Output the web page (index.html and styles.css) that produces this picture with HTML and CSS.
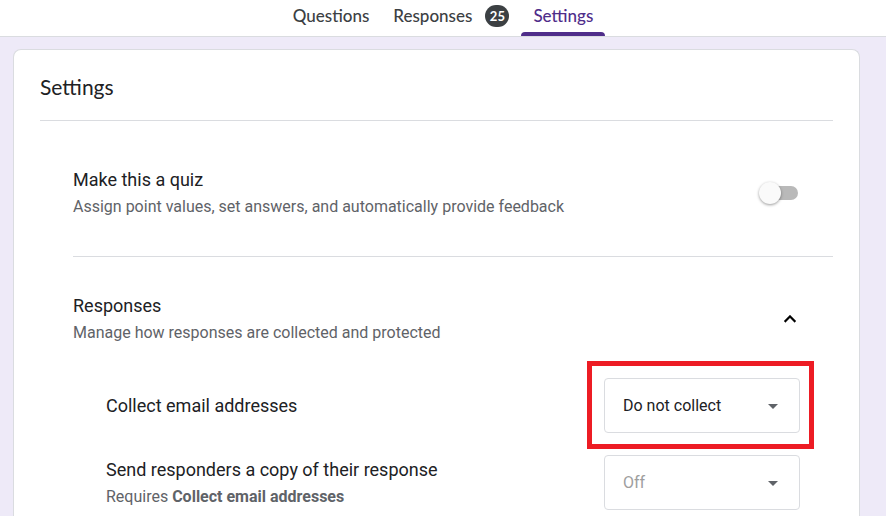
FILE: index.html
```
<!DOCTYPE html>
<html lang="en">
<head>
<meta charset="utf-8">
<meta name="viewport" content="width=device-width, initial-scale=1">
<title>Settings</title>
<link rel="stylesheet" href="styles.css">
</head>
<body>
<nav class="tabs">
  <a class="tab" href="#questions">Questions</a>
  <a class="tab" href="#responses">Responses <span class="badge">25</span></a>
  <a class="tab tab-active" href="#settings" aria-current="page">Settings</a>
</nav>
<main class="page">
  <section class="card">
    <h1 class="card-title">Settings</h1>
    <div class="sections">
      <div class="row quiz">
        <div class="text">
          <label class="heading" for="quiz">Make this a quiz</label>
          <p class="note">Assign point values, set answers, and automatically provide feedback</p>
        </div>
        <input class="switch" type="checkbox" role="switch" id="quiz">
      </div>
      <div class="row responses">
        <div class="text">
          <h2 class="heading">Responses</h2>
          <p class="note">Manage how responses are collected and protected</p>
        </div>
        <button class="collapse" type="button" aria-label="Collapse responses" aria-expanded="true">
          <svg width="24" height="24" viewBox="0 0 24 24" aria-hidden="true"><path d="M12 8l-6 6 1.41 1.41L12 10.83l4.59 4.58L18 14z" fill="#000" stroke="#000" stroke-width=".3"/></svg>
        </button>
      </div>
      <div class="options">
        <div class="row option">
          <div class="text">
            <label class="heading" for="collect">Collect email addresses</label>
          </div>
          <div class="picker picker-marked">
            <select id="collect">
              <option>Do not collect</option>
              <option>Verified</option>
              <option>Responder input</option>
            </select>
            <svg class="arrow" width="10" height="5" viewBox="0 0 10 5" aria-hidden="true"><path d="M0 0h10L5 5z" fill="#5f6368"/></svg>
          </div>
        </div>
        <div class="row option">
          <div class="text">
            <label class="heading" for="copy">Send responders a copy of their response</label>
            <p class="note">Requires <b>Collect email addresses</b></p>
          </div>
          <div class="picker">
            <select id="copy" disabled>
              <option>Off</option>
            </select>
            <svg class="arrow" width="10" height="5" viewBox="0 0 10 5" aria-hidden="true"><path d="M0 0h10L5 5z" fill="#5f6368"/></svg>
          </div>
        </div>
      </div>
    </div>
  </section>
</main>
</body>
</html>
```
FILE: styles.css
```
* {
  box-sizing: border-box;
}

body {
  margin: 0;
  height: 100vh;
  overflow: hidden;
  display: flex;
  flex-direction: column;
  background: #eeeaf8;
  color: #202124;
  font-family: Roboto, "Liberation Sans", sans-serif;
  font-size: 16px;
}

h1, h2, p {
  margin: 0;
  font-weight: 400;
}

.tabs {
  display: flex;
  justify-content: center;
  flex: none;
  background: #fff;
  border-bottom: 1px solid #dadce0;
}

.tab {
  position: relative;
  display: flex;
  align-items: center;
  gap: 13px;
  height: 36px;
  padding: 0 12px 5px;
  color: #3c4043;
  font-family: Lato, "Open Sans", sans-serif;
  font-size: 17px;
  font-weight: 500;
  text-decoration: none;
}

.tab-active {
  color: #4f2d8a;
}

.tab-active::after {
  content: "";
  position: absolute;
  left: 0;
  right: 0;
  bottom: 0;
  height: 4px;
  border-radius: 4px 4px 0 0;
  background: #4f2d8a;
}

.badge {
  width: 24px;
  height: 22px;
  border-radius: 12px;
  background: #3c4043;
  color: #fff;
  font-size: 13px;
  font-weight: 700;
  line-height: 22px;
  text-align: center;
}

.page {
  flex: 1;
  display: flex;
  padding: 12px 26px 0 13px;
}

.card {
  flex: 1;
  padding: 0 26px;
  background: #fff;
  border: 1px solid #dadce0;
  border-bottom: 0;
  border-radius: 8px 8px 0 0;
}

.card-title {
  padding: 23px 0 19px;
  border-bottom: 1px solid #dadce0;
  font-family: Lato, "Open Sans", sans-serif;
  font-size: 21px;
  line-height: 28px;
}

.sections {
  padding-left: 33px;
}

.row {
  display: flex;
  align-items: center;
  justify-content: space-between;
}

.heading {
  display: block;
  font-size: 18px;
  line-height: 24px;
}

.note {
  padding-top: 4px;
  color: #5f6368;
  font-size: 16px;
  line-height: 22px;
}

.quiz {
  padding: 47px 35px 38px 0;
  border-bottom: 1px solid #dadce0;
}

.switch {
  appearance: none;
  position: relative;
  width: 36px;
  height: 14px;
  margin: 0;
  border-radius: 7px;
  background: #b9b9b9;
}

.switch::before {
  content: "";
  position: absolute;
  top: -4px;
  left: -3px;
  width: 22px;
  height: 22px;
  border-radius: 50%;
  background: #fafafa;
  box-shadow: 0 1px 3px rgba(0, 0, 0, 0.4);
}

.responses {
  padding: 37px 31px 0 0;
}

.collapse {
  display: flex;
  padding: 0;
  border: 0;
  background: none;
}

.options {
  display: flex;
  flex-direction: column;
  gap: 22px;
  padding: 34px 33px 0 33px;
}

.picker {
  position: relative;
  width: 196px;
  height: 55px;
}

.picker select {
  appearance: none;
  width: 100%;
  height: 100%;
  padding: 0 18px;
  border: 1px solid #dadce0;
  border-radius: 4px;
  background: #fff;
  color: #202124;
  font: inherit;
}

.picker select:disabled {
  color: #9e9e9e;
  opacity: 1;
}

.arrow {
  position: absolute;
  top: 26px;
  right: 22px;
  pointer-events: none;
}

.picker-marked::after {
  content: "";
  position: absolute;
  inset: -17px -14px -16px -17px;
  border: 5px solid #ed1c24;
  pointer-events: none;
}
```
